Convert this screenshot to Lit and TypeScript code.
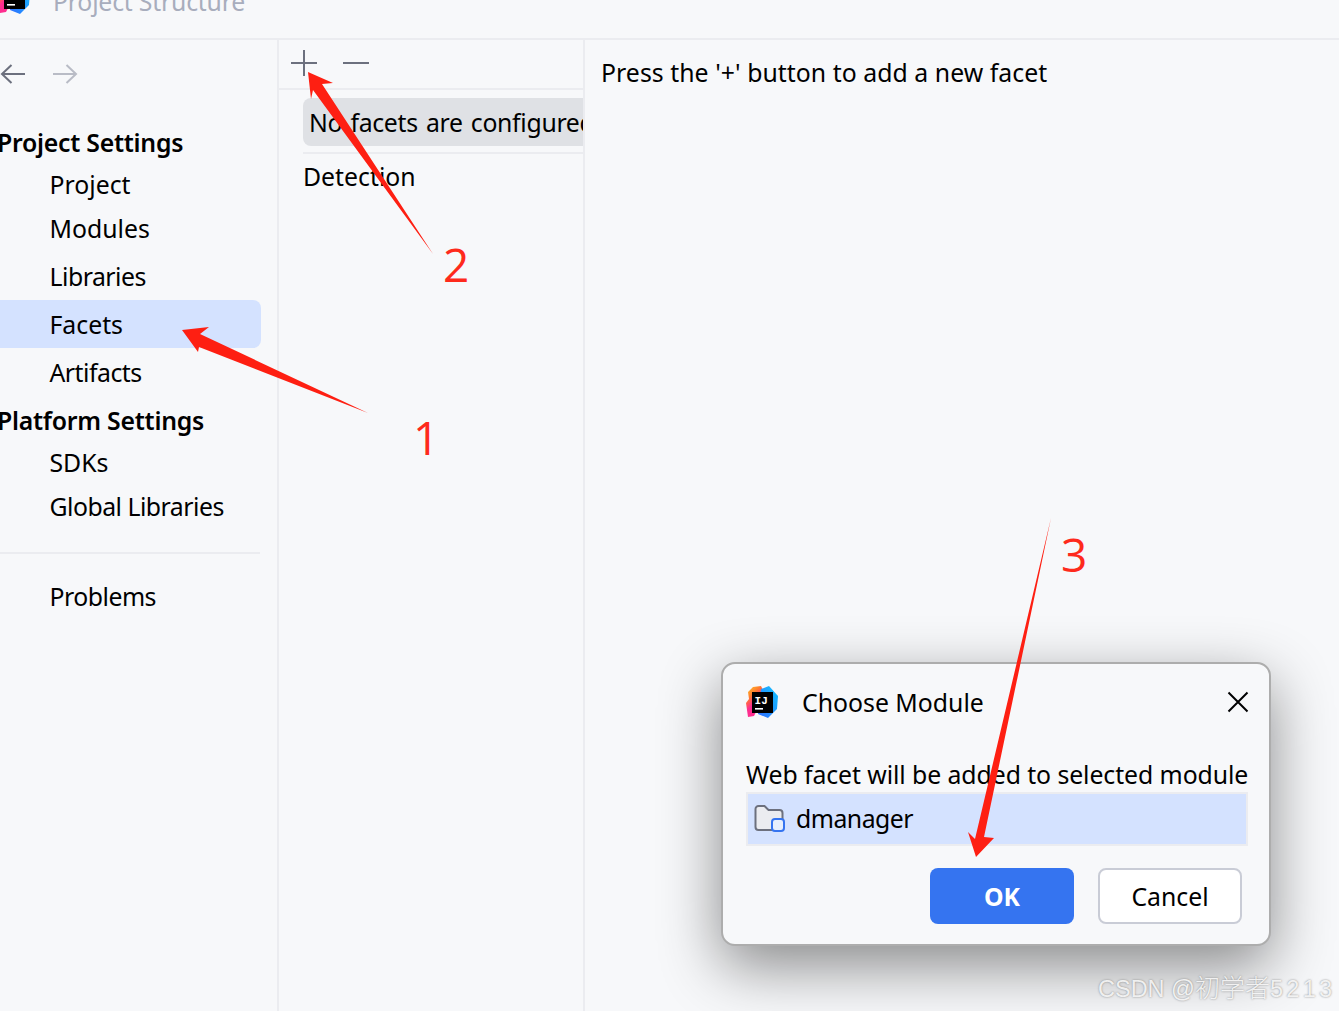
import { LitElement, html, css, svg } from "lit";
import { customElement } from "lit/decorators.js";

const logo = (cls: string) => html`<svg class=${cls} viewBox="0 0 32 32" width="32" height="32" aria-hidden="true">
  <defs>
    <linearGradient id="lgA" x1="0" y1="0" x2="0.6" y2="1"><stop offset="0" stop-color="#ffd028"/><stop offset="0.35" stop-color="#ff7a2e"/><stop offset="0.6" stop-color="#fe2e8f"/><stop offset="1" stop-color="#fe2e8f"/></linearGradient>
    <linearGradient id="lgB" x1="0" y1="1" x2="1" y2="0"><stop offset="0" stop-color="#2f6bff"/><stop offset="1" stop-color="#12c6ff"/></linearGradient>
  </defs>
  <polygon points="2,6 7,1 15,0 19,8 8,30 2,31 0,17 3,13" fill="url(#lgA)"/>
  <polygon points="15,3 23,0 32,10 31,23 22,32 12,28" fill="url(#lgB)"/>
  <rect x="6" y="6" width="21" height="21" fill="#000"/>
  <rect x="9" y="22" width="8" height="1.6" fill="#fff"/>
  <text x="8.6" y="17.5" class="ij">IJ</text>
</svg>`;

@customElement("app-root")
export class AppRoot extends LitElement {
  static styles = css`
    :host { display: block; width: 1339px; height: 1011px; position: relative; overflow: hidden; background: #f7f8fa; color: #000;
      font-family: "Noto Sans", "Liberation Sans", sans-serif; font-size: 24.8px; }
    .ij { font: 700 11px "Liberation Mono", monospace; fill: #fff; }
    .frame { display: flex; flex-direction: column; height: 1011px; }
    .titlebar { height: 38px; flex: none; border-bottom: 2px solid #ebecf0; display: flex; gap: 23px; overflow: hidden; }
    .t-logo { margin: -18px 0 0 -2px; flex: none; }
    .title { color: #a8adbd; margin-top: -17px; line-height: 36px; white-space: nowrap; letter-spacing: -0.2px; }
    .panes { flex: 1; display: flex; min-height: 0; }
    .side { width: 277px; flex: none; border-right: 2px solid #ebecf0; display: flex; flex-direction: column; overflow: hidden; }
    .nav { height: 66px; flex: none; display: flex; align-items: center; gap: 26px; padding: 2px 0 0 0; margin-bottom: 15px; box-sizing: border-box; }
    .nav svg { display: block; }
    .head { font-weight: 600; margin-left: -3px; height: 42px; line-height: 42px; white-space: nowrap; letter-spacing: -0.25px; flex: none; }
    .head.next { margin-top: 3px; }
    .item { height: 48px; line-height: 48px; padding-left: 49.500px; width: 211.500px; border-radius: 0 8px 8px 0; flex: none; white-space: nowrap; }
    .item.tight { height: 42px; line-height: 42px; }
    .item.mid { height: 47px; line-height: 46px; }
    .item.mid2 { height: 46px; line-height: 46px; }
    .item.sel { background: #d4e2ff; }
    .slim { letter-spacing: -0.5px; }
    .sep { height: 2px; width: 260px; background: #ebecf0; margin: 23px 0 18px; flex: none; }
    .middle { width: 304px; flex: none; border-right: 2px solid #ebecf0; overflow: hidden; display: flex; flex-direction: column; }
    .tools { flex: none; border-bottom: 2px solid #ebecf0; display: flex; gap: 26px; padding: 10px 0 0 12px; height: 38px; }
    .empty { margin: 8px 0 0 24px; height: 48px; line-height: 48px; background: #dfe1e5; border-radius: 8px 0 0 8px; padding-left: 6px; white-space: nowrap; overflow: hidden; letter-spacing: -0.3px; word-spacing: 2px; }
    .rule { height: 2px; background: #ebecf0; margin: 6px 0 0 24px; flex: none; }
    .detect { margin: 2px 0 0 24px; height: 40px; line-height: 40px; }
    .detail { flex: 1; padding: 12px 0 0 16px; line-height: 40px; white-space: nowrap; letter-spacing: 0.05px; }

    .dialog { position: absolute; left: 721px; top: 662px; width: 550px; height: 284px; box-sizing: border-box; background: #f7f8fa;
      border: 2px solid #adadad; border-radius: 14px; box-shadow: 0 20px 60px rgba(0,0,0,.45); padding: 0 23px;
      display: flex; flex-direction: column; }
    .d-head { display: flex; align-items: center; height: 76px; flex: none; }
    .d-logo { margin-right: 24px; flex: none; }
    .d-title { flex: 1; }
    .close { display: block; margin-right: -3px; }
    .msg { line-height: 36px; height: 36px; margin-top: 16px; white-space: nowrap; flex: none; letter-spacing: -0.07px; }
    .list { height: 54px; box-sizing: border-box; border: 2px solid #ebecf0; background: #d4e2ff; flex: none; width: 502px;
      display: flex; align-items: center; padding: 0 0 2px 6px; gap: 10px; letter-spacing: -0.5px; }
    .btns { display: flex; justify-content: flex-end; gap: 24px; padding: 22px 4px 0 0; }
    .btn { width: 144px; height: 56px; box-sizing: border-box; border-radius: 8px; display: flex; align-items: center; justify-content: center; }
    .ok { background: #3574f0; color: #fff; font-weight: 700; }
    .cancel { background: #fff; border: 2px solid #c9ccd6; }

    .ink { position: absolute; left: 0; top: 0; pointer-events: none; }
    .num { position: absolute; color: #fe2a1c; font-family: "Open Sans", sans-serif; font-weight: 400; font-size: 46px; line-height: 60px; }
    .n1 { left: 413px; top: 407px; }
    .n2 { left: 443px; top: 234px; }
    .n3 { left: 1061px; top: 524px; }
    .mark { position: absolute; left: 1098px; top: 970px; font-family: "Liberation Sans", "Noto Sans CJK SC", sans-serif; font-size: 23.500px; line-height: 36px; white-space: nowrap;
      color: rgba(255,255,255,.85); text-shadow: 0 0 2px rgba(120,120,120,.9); }
    .mark .cjk { font-size: 25px; font-weight: 300; }
    .mark .digits { letter-spacing: 3.300px; }
  `;

  render() {
    const arrow = (pts: string) => svg`<polygon points=${pts} fill="#fe1f12"/>`;
    return html`
      <div class="frame">
        <div class="titlebar">${logo("t-logo")}<div class="title">Project Structure</div></div>
        <div class="panes">
          <div class="side">
            <div class="nav">
              <svg width="26" height="26" viewBox="0 0 26 26" fill="none" stroke="#6c707e" stroke-width="2"><path d="M25 13H2M11.500 4 2 13l9.500 9"/></svg>
              <svg width="26" height="26" viewBox="0 0 26 26" fill="none" stroke="#b9bcc6" stroke-width="2"><path d="M1 13h23M14.500 4 24 13l-9.500 9"/></svg>
            </div>
            <div class="head">Project Settings</div>
            <div class="item tight">Project</div>
            <div class="item mid">Modules</div>
            <div class="item"><span class="slim">Libraries</span></div>
            <div class="item sel">Facets</div>
            <div class="item"><span class="slim">Artifacts</span></div>
            <div class="head next">Platform Settings</div>
            <div class="item tight">SDKs</div>
            <div class="item mid2"><span class="slim">Global Libraries</span></div>
            <div class="sep"></div>
            <div class="item"><span class="slim">Problems</span></div>
          </div>
          <div class="middle">
            <div class="tools">
              <svg width="26" height="26" viewBox="0 0 26 26" stroke="#6c707e" stroke-width="2"><path d="M0 13h26M13 0v26"/></svg>
              <svg width="26" height="26" viewBox="0 0 26 26" stroke="#6c707e" stroke-width="2"><path d="M0 13h26"/></svg>
            </div>
            <div class="empty">No facets are configured</div>
            <div class="rule"></div>
            <div class="detect">Detection</div>
          </div>
          <div class="detail">Press the '+' button to add a new facet</div>
        </div>
      </div>

      <div class="dialog">
        <div class="d-head">
          ${logo("d-logo")}
          <div class="d-title">Choose Module</div>
          <svg class="close" width="22" height="22" viewBox="0 0 22 22" stroke="#000" stroke-width="2" fill="none"><path d="M1.500 1.500l19 19M20.500 1.500l-19 19"/></svg>
        </div>
        <div class="msg">Web facet will be added to selected module</div>
        <div class="list">
          <svg width="32" height="28" viewBox="0 0 32 28" fill="none">
            <path d="M1.500 5a3 3 0 0 1 3-3h6l4 4h11a3 3 0 0 1 3 3v14a3 3 0 0 1-3 3h-21a3 3 0 0 1-3-3z" fill="#ebecf0" stroke="#6c707e" stroke-width="2"/>
            <rect x="18" y="15" width="12" height="12" rx="3" fill="#e7effd" stroke="#3574f0" stroke-width="2"/>
          </svg>
          <span>dmanager</span>
        </div>
        <div class="btns"><div class="btn ok">OK</div><div class="btn cancel">Cancel</div></div>
      </div>

      <svg class="ink" width="1339" height="1011" viewBox="0 0 1339 1011" aria-hidden="true">
        ${arrow("182,330 209,327 200,334 368,413 199,347 198,352")}
        ${arrow("308,72 333,83 322,84 433,254 313,90 311,99")}
        ${arrow("976,857 968,832 975,839 1051,518 984,837 994,838")}
      </svg>
      <div class="num n1">1</div>
      <div class="num n2">2</div>
      <div class="num n3">3</div>
      <div class="mark">CSDN @<span class="cjk">初学者</span><span class="digits">5213</span></div>
    `;
  }
}
